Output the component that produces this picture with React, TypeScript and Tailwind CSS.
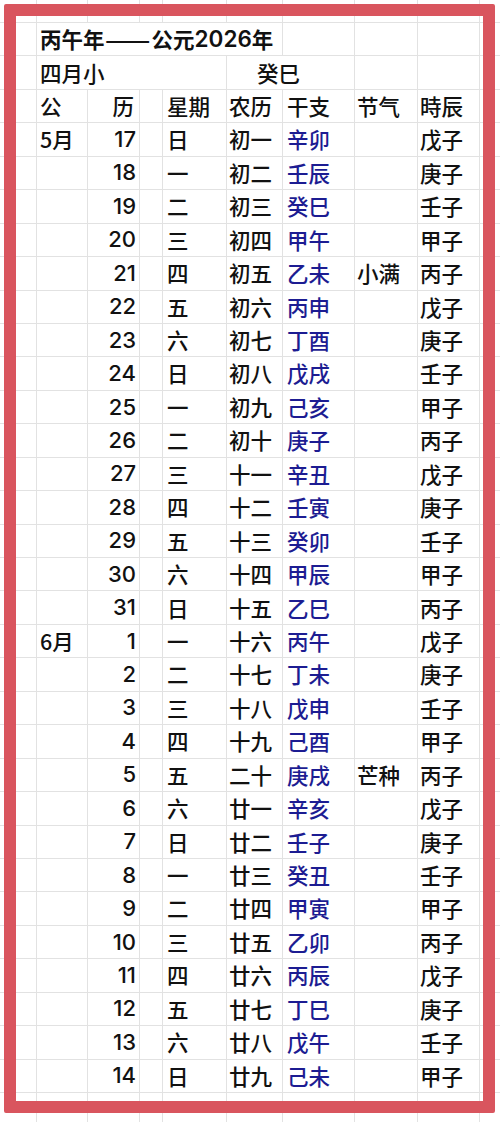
const font = { fontFamily: '"Noto Sans CJK SC", "Noto Sans", sans-serif' };
const digits = { fontFamily: 'Inter, "Noto Sans CJK SC", sans-serif' };

type Day = { m?: string; d: number; w: string; lunar: string; gz: string; jq?: string; sc: string };

const days: Day[] = [
  { m: "5月", d: 17, w: "日", lunar: "初一", gz: "辛卯", sc: "戊子" },
  { d: 18, w: "一", lunar: "初二", gz: "壬辰", sc: "庚子" },
  { d: 19, w: "二", lunar: "初三", gz: "癸巳", sc: "壬子" },
  { d: 20, w: "三", lunar: "初四", gz: "甲午", sc: "甲子" },
  { d: 21, w: "四", lunar: "初五", gz: "乙未", jq: "小满", sc: "丙子" },
  { d: 22, w: "五", lunar: "初六", gz: "丙申", sc: "戊子" },
  { d: 23, w: "六", lunar: "初七", gz: "丁酉", sc: "庚子" },
  { d: 24, w: "日", lunar: "初八", gz: "戊戌", sc: "壬子" },
  { d: 25, w: "一", lunar: "初九", gz: "己亥", sc: "甲子" },
  { d: 26, w: "二", lunar: "初十", gz: "庚子", sc: "丙子" },
  { d: 27, w: "三", lunar: "十一", gz: "辛丑", sc: "戊子" },
  { d: 28, w: "四", lunar: "十二", gz: "壬寅", sc: "庚子" },
  { d: 29, w: "五", lunar: "十三", gz: "癸卯", sc: "壬子" },
  { d: 30, w: "六", lunar: "十四", gz: "甲辰", sc: "甲子" },
  { d: 31, w: "日", lunar: "十五", gz: "乙巳", sc: "丙子" },
  { m: "6月", d: 1, w: "一", lunar: "十六", gz: "丙午", sc: "戊子" },
  { d: 2, w: "二", lunar: "十七", gz: "丁未", sc: "庚子" },
  { d: 3, w: "三", lunar: "十八", gz: "戊申", sc: "壬子" },
  { d: 4, w: "四", lunar: "十九", gz: "己酉", sc: "甲子" },
  { d: 5, w: "五", lunar: "二十", gz: "庚戌", jq: "芒种", sc: "丙子" },
  { d: 6, w: "六", lunar: "廿一", gz: "辛亥", sc: "戊子" },
  { d: 7, w: "日", lunar: "廿二", gz: "壬子", sc: "庚子" },
  { d: 8, w: "一", lunar: "廿三", gz: "癸丑", sc: "壬子" },
  { d: 9, w: "二", lunar: "廿四", gz: "甲寅", sc: "甲子" },
  { d: 10, w: "三", lunar: "廿五", gz: "乙卯", sc: "丙子" },
  { d: 11, w: "四", lunar: "廿六", gz: "丙辰", sc: "戊子" },
  { d: 12, w: "五", lunar: "廿七", gz: "丁巳", sc: "庚子" },
  { d: 13, w: "六", lunar: "廿八", gz: "戊午", sc: "壬子" },
  { d: 14, w: "日", lunar: "廿九", gz: "己未", sc: "甲子" },
];

const cell = "border-r border-b border-[#e2e2e2] flex items-center whitespace-nowrap overflow-visible";

function Row({ children, h = "h-[33.45px]" }: { children: React.ReactNode; h?: string }) {
  return <div className={`flex w-[500px] ${h}`}>{children}</div>;
}

function Edge() {
  return <div className={`${cell} w-[37px]`} />;
}

function Tail() {
  return <div className={`${cell} w-[20px] border-r-0`} />;
}

function Blank({ h }: { h: string }) {
  return (
    <Row h={h}>
      <Edge />
      <div className={`${cell} w-[51px]`} />
      <div className={`${cell} w-[52px]`} />
      <div className={`${cell} w-[23px]`} />
      <div className={`${cell} w-[64px]`} />
      <div className={`${cell} w-[56px]`} />
      <div className={`${cell} w-[72px]`} />
      <div className={`${cell} w-[63px]`} />
      <div className={`${cell} w-[62px]`} />
      <Tail />
    </Row>
  );
}

export default function App() {
  return (
    <div className="relative w-[500px] h-[1122px] overflow-hidden bg-white text-[21.5px] font-medium text-[#111111]" style={font}>
      <Blank h="h-[23px]" />

      <Row>
        <Edge />
        <div className={`${cell} w-[246px] pl-[3px] font-semibold`}>
          丙午年
          <span className="inline-block w-[47px]">
            <span className="inline-block origin-left scale-x-[1.24]">——</span>
          </span>
          公元
          <span className="text-[22.5px]" style={digits}>2026</span>年
        </div>
        <div className={`${cell} w-[72px]`} />
        <div className={`${cell} w-[63px]`} />
        <div className={`${cell} w-[62px]`} />
        <Tail />
      </Row>

      <Row>
        <Edge />
        <div className={`${cell} w-[190px] pl-[3px]`}>四月小</div>
        <div className={`${cell} w-[128px] pl-[30px]`}>癸巳</div>
        <div className={`${cell} w-[63px]`} />
        <div className={`${cell} w-[62px]`} />
        <Tail />
      </Row>

      <Row>
        <Edge />
        <div className={`${cell} w-[51px] pl-[3px]`}>公</div>
        <div className={`${cell} w-[52px] justify-end pr-[5px]`}>历</div>
        <div className={`${cell} w-[23px]`} />
        <div className={`${cell} w-[64px] pl-[4px]`}>星期</div>
        <div className={`${cell} w-[56px] pl-[2px]`}>农历</div>
        <div className={`${cell} w-[72px] pl-[4px]`}>干支</div>
        <div className={`${cell} w-[63px] pl-[2px]`}>节气</div>
        <div className={`${cell} w-[62px] pl-[2px]`}>時辰</div>
        <Tail />
      </Row>

      {days.map((r, i) => (
        <Row key={i}>
          <Edge />
          <div className={`${cell} w-[51px] pl-[3px]`}>{r.m}</div>
          <div className={`${cell} w-[52px] justify-end pr-[3px] text-[22px]`} style={digits}>
            {r.d}
          </div>
          <div className={`${cell} w-[23px]`} />
          <div className={`${cell} w-[64px] pl-[4px]`}>{r.w}</div>
          <div className={`${cell} w-[56px] pl-[2px]`}>{r.lunar}</div>
          <div className={`${cell} w-[72px] pl-[4px] text-[#1c1c92]`}>{r.gz}</div>
          <div className={`${cell} w-[63px] pl-[2px]`}>{r.jq}</div>
          <div className={`${cell} w-[62px] pl-[2px]`}>{r.sc}</div>
          <Tail />
        </Row>
      ))}

      <Blank h="h-[40px]" />

      {/* red frame drawn over the sheet */}
      <div className="pointer-events-none absolute left-[4px] top-[4px] w-[491px] h-[1109px] border-[12px] border-[#d9555e] rounded-[2px]" />
    </div>
  );
}
